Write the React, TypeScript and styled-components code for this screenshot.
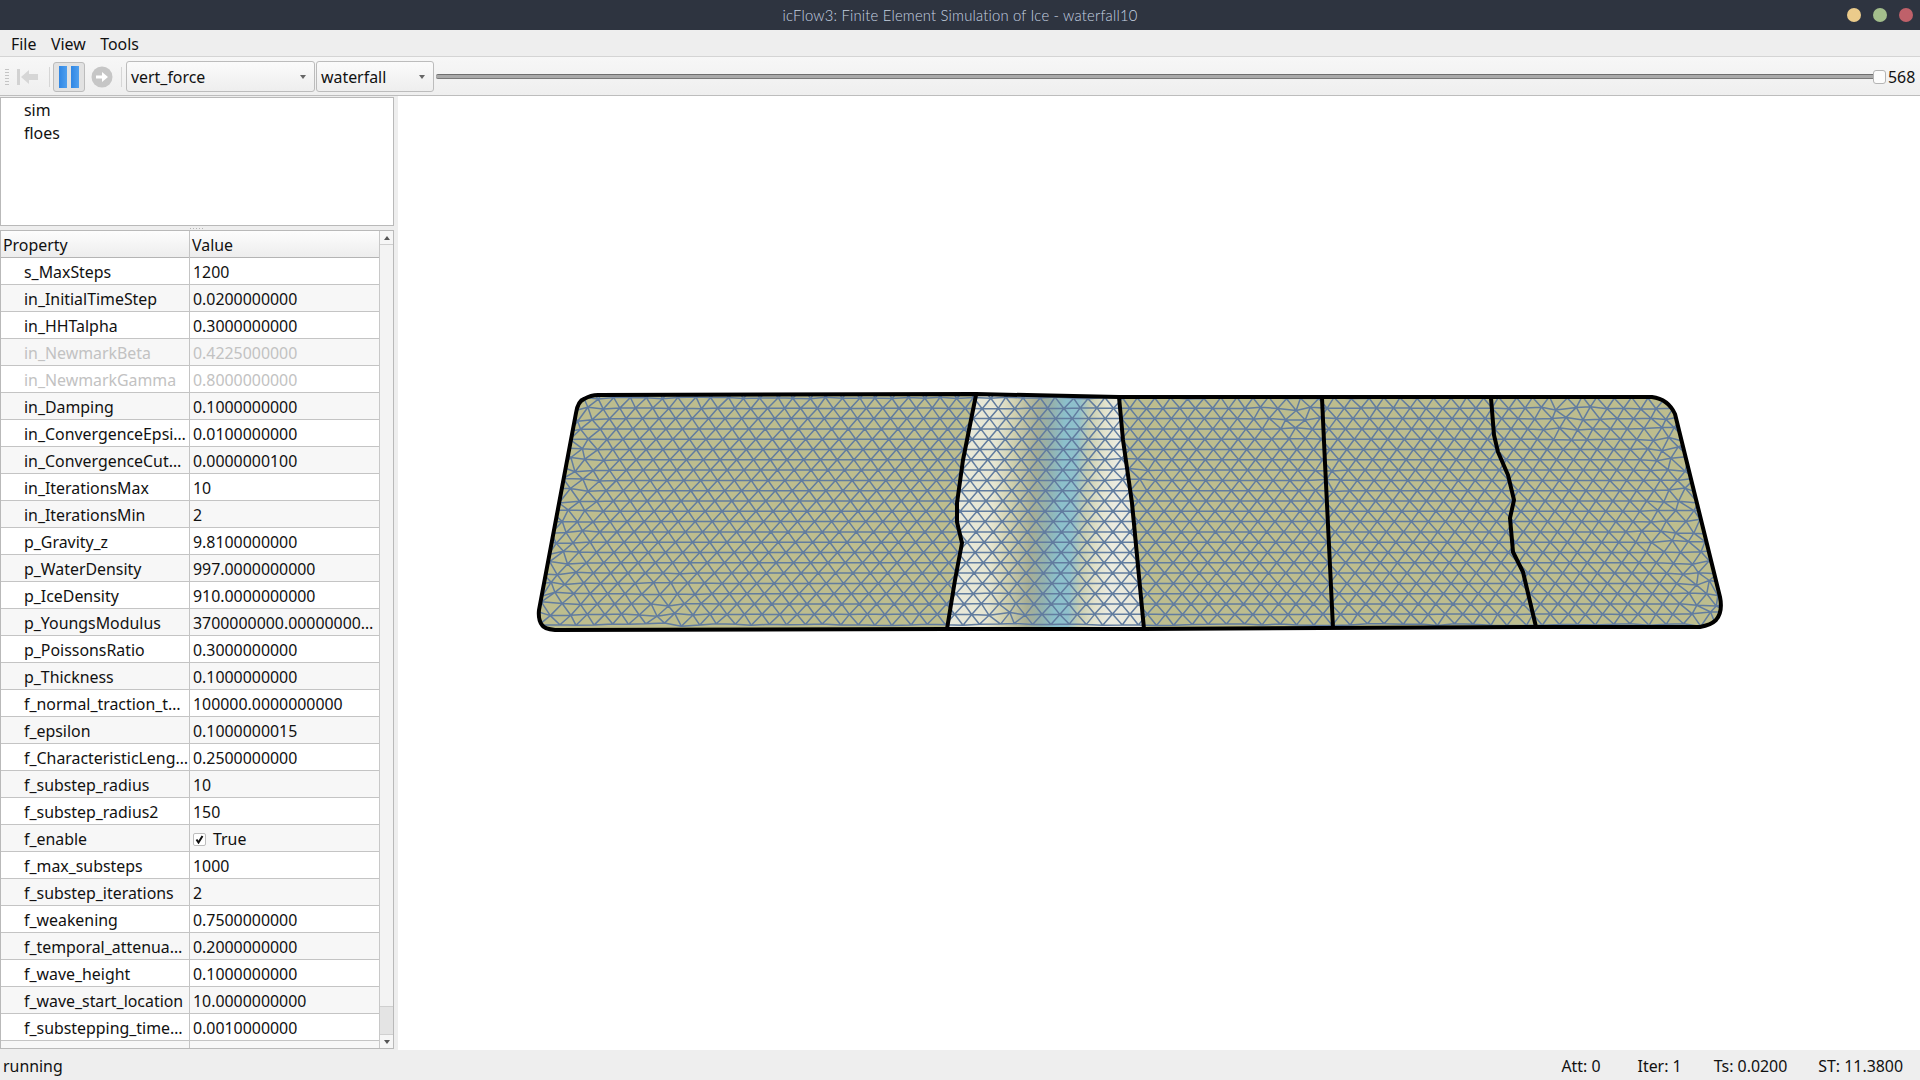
import { useMemo } from "react";
import styled, { createGlobalStyle } from "styled-components";

const GlobalStyle = createGlobalStyle`
  html, body {
    margin: 0;
    padding: 0;
    overflow: hidden;
  }
  body {
    font-family: "Noto Sans", "Open Sans", sans-serif;
    font-size: 15.9px;
    color: #111;
  }
`;

const Window = styled.div`
  width: 1920px;
  height: 1080px;
  display: flex;
  flex-direction: column;
  background: #eeeeee;
`;

const TitleBar = styled.div`
  height: 30px;
  flex: none;
  background: #2e3440;
  display: flex;
  align-items: center;
  justify-content: center;
  position: relative;
  font-family: "Lato", sans-serif;
  font-weight: 300;
  font-size: 14.8px;
  letter-spacing: 0.2px;
  color: #c6d2e0;
`;

const WindowButtons = styled.div`
  position: absolute;
  right: 7px;
  top: 8px;
  display: flex;
  gap: 12px;
`;

const WindowDot = styled.span<{ $color: string }>`
  width: 14px;
  height: 14px;
  border-radius: 50%;
  background: ${(p) => p.$color};
`;

const MenuBar = styled.div`
  height: 27px;
  flex: none;
  box-sizing: border-box;
  padding: 1px 0 0 11px;
  display: flex;
  align-items: center;
  gap: 14.5px;
  background: #eeeeee;
  border-bottom: 1px solid #d4d4d4;
  line-height: 26px;
`;

const Toolbar = styled.div`
  height: 39px;
  flex: none;
  box-sizing: border-box;
  display: flex;
  align-items: center;
  padding: 1px 5px 0 5px;
  background: linear-gradient(#f7f7f7, #efefef);
  border-bottom: 1px solid #bdbdbd;
`;

const Grip = styled.div`
  width: 4px;
  height: 18px;
  margin-right: 8px;
  background-image: radial-gradient(circle, #c4c4c4 0.7px, transparent 0.8px);
  background-size: 2px 3px;
`;

const ToolIcon = styled.svg`
  display: block;
  flex: none;
`;

const BackIcon = styled(ToolIcon)`
  margin-right: 10px;
`;

const ForwardIcon = styled(ToolIcon)`
  margin-right: 8px;
`;

const Separator = styled.div`
  width: 1px;
  height: 20px;
  background: #d6d6d6;
  flex: none;
`;

const PauseButton = styled.div`
  width: 32px;
  height: 30px;
  box-sizing: border-box;
  margin: 0 6px 0 3px;
  border: 1px solid #bcbcbc;
  border-radius: 3px;
  background: #e2e2e2;
  display: flex;
  align-items: center;
  justify-content: center;
  gap: 4px;
  flex: none;
`;

const PauseBar = styled.span`
  width: 8px;
  height: 22px;
  background: linear-gradient(90deg, #2f86e4, #4f9fee);
`;

const Combo = styled.div<{ $width: number; $left: number }>`
  width: ${(p) => p.$width}px;
  height: 31px;
  margin-left: ${(p) => p.$left}px;
  box-sizing: border-box;
  flex: none;
  display: flex;
  align-items: center;
  justify-content: space-between;
  padding: 1px 8px 0 4px;
  border: 1px solid #bcbcbc;
  border-radius: 3px;
  background: linear-gradient(#fbfbfb, #eeeeee);
`;

const Caret = styled.span`
  width: 0;
  height: 0;
  border-left: 3.5px solid transparent;
  border-right: 3.5px solid transparent;
  border-top: 4px solid #666;
`;

const Slider = styled.div`
  flex: 1;
  height: 14px;
  margin-left: 2px;
  position: relative;
  display: flex;
  align-items: center;
`;

const SliderGroove = styled.div`
  width: 100%;
  height: 5px;
  box-sizing: border-box;
  border-radius: 2px;
  background: #aaaaaa;
  border-top: 1px solid #6f6f6f;
  border-bottom: 1px solid #7a7a7a;
`;

const SliderHandle = styled.div`
  position: absolute;
  right: 0;
  top: 0;
  width: 13px;
  height: 14px;
  box-sizing: border-box;
  border: 1px solid #b4b4b4;
  border-radius: 3px;
  background: #fcfcfc;
`;

const SliderValue = styled.span`
  margin-left: 2px;
  width: 27px;
  flex: none;
`;

const Content = styled.div`
  flex: 1;
  min-height: 0;
  display: flex;
`;

const LeftPanel = styled.div`
  width: 394px;
  flex: none;
  box-sizing: border-box;
  padding: 1px 0 1px;
  display: flex;
  flex-direction: column;
`;

const TreeBox = styled.div`
  height: 129px;
  flex: none;
  box-sizing: border-box;
  background: #fff;
  border: 1px solid #b9b9b9;
  padding: 1px 0 0 23px;
`;

const TreeRow = styled.div`
  height: 23px;
  line-height: 23px;
`;

const SplitHandle = styled.div`
  height: 4px;
  flex: none;
  display: flex;
  justify-content: center;
  align-items: center;
  &::before {
    content: "";
    width: 16px;
    height: 1px;
    background-image: radial-gradient(circle, #b4b4b4 0.6px, transparent 0.7px);
    background-size: 3px 1px;
  }
`;

const TableFrame = styled.div`
  flex: 1;
  min-height: 0;
  display: flex;
  box-sizing: border-box;
  border: 1px solid #b9b9b9;
  background: #fff;
`;

const TableBody = styled.div`
  width: 378px;
  flex: none;
  overflow: hidden;
`;

const Row = styled.div<{ $shaded?: boolean; $disabled?: boolean }>`
  height: 27px;
  box-sizing: border-box;
  display: grid;
  grid-template-columns: 189px 189px;
  background: ${(p) => (p.$shaded ? "#f7f7f7" : "#fff")};
  color: ${(p) => (p.$disabled ? "#c2c2c2" : "#111")};
  border-bottom: 1px solid #c4c4c4;
  line-height: 26px;
`;

const HeaderRow = styled(Row)`
  background: linear-gradient(#fdfdfd, #ededed);
  border-bottom: 1px solid #b4b4b4;
`;

const HeaderCell = styled.div`
  padding: 1px 0 0 2px;
  border-right: 1px solid #c4c4c4;
  &:last-child {
    border-right: none;
  }
`;

const NameCell = styled.div`
  padding: 1px 0 0 23px;
  border-right: 1px solid #c4c4c4;
  white-space: nowrap;
  overflow: hidden;
`;

const ValueCell = styled.div`
  padding: 2px 0 0 3px;
  white-space: nowrap;
  overflow: hidden;
  display: flex;
  align-items: center;
`;

const CheckBox = styled.span`
  width: 13px;
  height: 13px;
  box-sizing: border-box;
  border: 1px solid #bdbdbd;
  border-radius: 2px;
  background: #fff;
  margin-right: 7px;
  display: flex;
  align-items: center;
  justify-content: center;
`;

const ScrollBar = styled.div`
  flex: 1;
  display: flex;
  flex-direction: column;
  background: #f3f3f3;
  border-left: 1px solid #c8c8c8;
`;

const ScrollButton = styled.div<{ $up?: boolean }>`
  height: 13px;
  flex: none;
  display: flex;
  align-items: center;
  justify-content: center;
  background: #f6f6f6;
  ${(p) => (p.$up ? "border-bottom: 1px solid #d0d0d0;" : "border-top: 1px solid #d0d0d0;")}
  &::before {
    content: "";
    border-left: 3.5px solid transparent;
    border-right: 3.5px solid transparent;
    ${(p) => (p.$up ? "border-bottom: 4px solid #555;" : "border-top: 4px solid #555;")}
  }
`;

const ScrollTrack = styled.div`
  flex: 1;
  display: flex;
  flex-direction: column;
  justify-content: flex-end;
`;

const ScrollThumb = styled.div`
  height: 28px;
  box-sizing: border-box;
  background: #e4e4e4;
  border-top: 1px solid #cfcfcf;
`;

const Canvas = styled.div`
  flex: 1;
  margin-left: 4px;
  background: #fff;
  min-width: 0;
`;

const CanvasSvg = styled.svg`
  display: block;
`;

const StatusBar = styled.div`
  height: 30px;
  flex: none;
  box-sizing: border-box;
  display: flex;
  align-items: center;
  padding: 1px 17px 0 3px;
  background: #eeeeee;
`;

const StatusRunning = styled.span`
  flex: 1;
`;

const StatusItem = styled.span<{ $left: number }>`
  margin-left: ${(p) => p.$left}px;
`;

type Prop = { name: string; value: string; disabled?: boolean; check?: boolean };

const props: Prop[] = [
  { name: "s_MaxSteps", value: "1200" },
  { name: "in_InitialTimeStep", value: "0.0200000000" },
  { name: "in_HHTalpha", value: "0.3000000000" },
  { name: "in_NewmarkBeta", value: "0.4225000000", disabled: true },
  { name: "in_NewmarkGamma", value: "0.8000000000", disabled: true },
  { name: "in_Damping", value: "0.1000000000" },
  { name: "in_ConvergenceEpsi…", value: "0.0100000000" },
  { name: "in_ConvergenceCut…", value: "0.0000000100" },
  { name: "in_IterationsMax", value: "10" },
  { name: "in_IterationsMin", value: "2" },
  { name: "p_Gravity_z", value: "9.8100000000" },
  { name: "p_WaterDensity", value: "997.0000000000" },
  { name: "p_IceDensity", value: "910.0000000000" },
  { name: "p_YoungsModulus", value: "3700000000.00000000…" },
  { name: "p_PoissonsRatio", value: "0.3000000000" },
  { name: "p_Thickness", value: "0.1000000000" },
  { name: "f_normal_traction_t…", value: "100000.0000000000" },
  { name: "f_epsilon", value: "0.1000000015" },
  { name: "f_CharacteristicLeng…", value: "0.2500000000" },
  { name: "f_substep_radius", value: "10" },
  { name: "f_substep_radius2", value: "150" },
  { name: "f_enable", value: "True", check: true },
  { name: "f_max_substeps", value: "1000" },
  { name: "f_substep_iterations", value: "2" },
  { name: "f_weakening", value: "0.7500000000" },
  { name: "f_temporal_attenua…", value: "0.2000000000" },
  { name: "f_wave_height", value: "0.1000000000" },
  { name: "f_wave_start_location", value: "10.0000000000" },
  { name: "f_substepping_time…", value: "0.0010000000" },
  { name: "", value: "" },
];

const OUTLINE =
  "M598 395 L976 394 L1119 397 L1652 397 Q1668 399 1675 414 L1720 597 Q1723 612 1716 620 Q1711 625 1700 627 L1536 627 L1143 629 L947 629 L555 630 Q544 629 542 625 Q538 620 539 610 L576 413 Q578 401 584 399 Q591 395 598 395Z";
const WAVE = "M976 394 L1119 397 L1143 629 L947 629 L955 580 L962 543 L957 522 L957 503 L963 460Z";
const CRACKS = [
  "M976 395 L963 460 L957 503 L957 522 L962 543 L955 580 L947 629",
  "M1119 397 L1123 440 L1132 503 L1144 629",
  "M1322 398 L1325 463 L1333 628",
  "M1491 398 L1494 435 L1498 452 L1508 475 L1514 500 L1510 518 L1513 552 L1523 572 L1536 627",
];
// spots where the mesh generator made uneven triangles
const PATCHES = [
  [670, 612, 45],
  [1290, 410, 40],
  [1570, 405, 45],
  [1665, 530, 30],
  [1000, 620, 30],
  [1130, 470, 22],
  [1325, 480, 16],
];

function noise(a: number, b: number) {
  const s = Math.sin(a * 127.1 + b * 311.7) * 43758.5453;
  return s - Math.floor(s);
}

function buildMesh() {
  const rows = 24;
  const cols = 80;
  const pts: [number, number][][] = [];
  for (let j = 0; j < rows; j++) {
    const row: [number, number][] = [];
    const y = 398 + 10.3 * (j - 1);
    const t = (y - 395) / 235;
    const base = 16.4 + 1.2 * t;
    const left = 575 - 38 * t;
    const right = 1675 + 46 * t;
    for (let i = 0; i < cols; i++) {
      const x = 1130 + (i - cols / 2 + (j % 2 ? 0.5 : 0)) * base;
      const edge = Math.min(x - left, right - x);
      let amp = Math.max(0, 1 - edge / 50) * 4;
      amp = Math.max(amp, Math.max(0, 1 - Math.min(y - 394, 630 - y) / 22) * 1.5);
      for (const [px, py, r] of PATCHES) {
        const d = Math.hypot(x - px, y - py);
        if (d < r) amp = Math.max(amp, 2.8 * (1 - d / r) + 0.6);
      }
      row.push([x + (noise(i, j) - 0.5) * 2 * amp, y + (noise(j + 3, i + 7) - 0.5) * 1.6 * amp]);
    }
    pts.push(row);
  }
  let d = "";
  const seg = (a: [number, number], b: [number, number]) => {
    d += `M${a[0].toFixed(1)} ${a[1].toFixed(1)}L${b[0].toFixed(1)} ${b[1].toFixed(1)}`;
  };
  for (let j = 0; j < rows; j++) {
    for (let i = 0; i < cols; i++) {
      if (i + 1 < cols) seg(pts[j][i], pts[j][i + 1]);
      if (j + 1 < rows) {
        seg(pts[j][i], pts[j + 1][i]);
        const k = j % 2 ? i + 1 : i - 1;
        if (k >= 0 && k < cols) seg(pts[j][i], pts[j + 1][k]);
      }
    }
  }
  return d;
}

function Plate() {
  const mesh = useMemo(buildMesh, []);
  return (
    <CanvasSvg width={1522} height={954} viewBox="398 96 1522 954">
      <defs>
        <clipPath id="plate">
          <path d={OUTLINE} />
        </clipPath>
        <linearGradient id="wave" gradientUnits="userSpaceOnUse" x1="955" y1="505" x2="1140" y2="515">
          <stop offset="0" stopColor="#e9e9dc" />
          <stop offset="0.2" stopColor="#e6e6d2" />
          <stop offset="0.3" stopColor="#cfcfae" />
          <stop offset="0.42" stopColor="#a8ae94" />
          <stop offset="0.5" stopColor="#94b2ae" />
          <stop offset="0.57" stopColor="#8cc0cc" />
          <stop offset="0.64" stopColor="#90c0cc" />
          <stop offset="0.7" stopColor="#c8cdb0" />
          <stop offset="0.78" stopColor="#e2e2cc" />
          <stop offset="0.86" stopColor="#ebebe0" />
          <stop offset="1" stopColor="#e8e8da" />
        </linearGradient>
      </defs>
      <path d={OUTLINE} fill="#bdbd8e" />
      <path d={WAVE} fill="url(#wave)" />
      <g clipPath="url(#plate)">
        <path d={mesh} fill="none" stroke="#617c9f" strokeWidth={1.5} />
      </g>
      {CRACKS.map((c) => (
        <path key={c} d={c} fill="none" stroke="#000" strokeWidth={4} strokeLinejoin="round" />
      ))}
      <path d={OUTLINE} fill="none" stroke="#000" strokeWidth={4} strokeLinejoin="round" />
    </CanvasSvg>
  );
}

function App() {
  return (
    <>
      <GlobalStyle />
      <Window>
        <TitleBar>
          icFlow3: Finite Element Simulation of Ice - waterfall10
          <WindowButtons>
            <WindowDot $color="#ebcb8b" />
            <WindowDot $color="#a3be8c" />
            <WindowDot $color="#bf616a" />
          </WindowButtons>
        </TitleBar>
        <MenuBar>
          <span>File</span>
          <span>View</span>
          <span>Tools</span>
        </MenuBar>
        <Toolbar>
          <Grip />
          <BackIcon width={22} height={18} viewBox="0 0 22 18">
            <rect x="0" y="1" width="3" height="16" fill="#d2d2d2" />
            <path d="M4 9 L12 2 V6 H21 V12 H12 V16 Z" fill="#d6d6d6" />
          </BackIcon>
          <Separator />
          <PauseButton>
            <PauseBar />
            <PauseBar />
          </PauseButton>
          <ForwardIcon width={22} height={22} viewBox="0 0 22 22">
            <circle cx="11" cy="11" r="10.5" fill="#c6c6c6" />
            <path d="M5 9.5 H11 V6 L17 11 L11 16 V12.5 H5 Z" fill="#fff" />
          </ForwardIcon>
          <Separator />
          <Combo $width={189} $left={4}>
            vert_force
            <Caret />
          </Combo>
          <Combo $width={118} $left={1}>
            waterfall
            <Caret />
          </Combo>
          <Slider>
            <SliderGroove />
            <SliderHandle />
          </Slider>
          <SliderValue>568</SliderValue>
        </Toolbar>
        <Content>
          <LeftPanel>
            <TreeBox>
              <TreeRow>sim</TreeRow>
              <TreeRow>floes</TreeRow>
            </TreeBox>
            <SplitHandle />
            <TableFrame>
              <TableBody>
                <HeaderRow>
                  <HeaderCell>Property</HeaderCell>
                  <HeaderCell>Value</HeaderCell>
                </HeaderRow>
                {props.map((p, i) => (
                  <Row key={i} $shaded={i % 2 === 1} $disabled={p.disabled}>
                    <NameCell>{p.name}</NameCell>
                    <ValueCell>
                      {p.check && (
                        <CheckBox>
                          <svg width="9" height="9" viewBox="0 0 9 9">
                            <path d="M1.5 4.5 L3.5 7.5 L7.5 1" fill="none" stroke="#111" strokeWidth="2" />
                          </svg>
                        </CheckBox>
                      )}
                      {p.value}
                    </ValueCell>
                  </Row>
                ))}
              </TableBody>
              <ScrollBar>
                <ScrollButton $up />
                <ScrollTrack>
                  <ScrollThumb />
                </ScrollTrack>
                <ScrollButton />
              </ScrollBar>
            </TableFrame>
          </LeftPanel>
          <Canvas>
            <Plate />
          </Canvas>
        </Content>
        <StatusBar>
          <StatusRunning>running</StatusRunning>
          <StatusItem $left={0}>Att: 0</StatusItem>
          <StatusItem $left={37}>Iter: 1</StatusItem>
          <StatusItem $left={32}>Ts: 0.0200</StatusItem>
          <StatusItem $left={31}>ST: 11.3800</StatusItem>
        </StatusBar>
      </Window>
    </>
  );
}

export default App;
